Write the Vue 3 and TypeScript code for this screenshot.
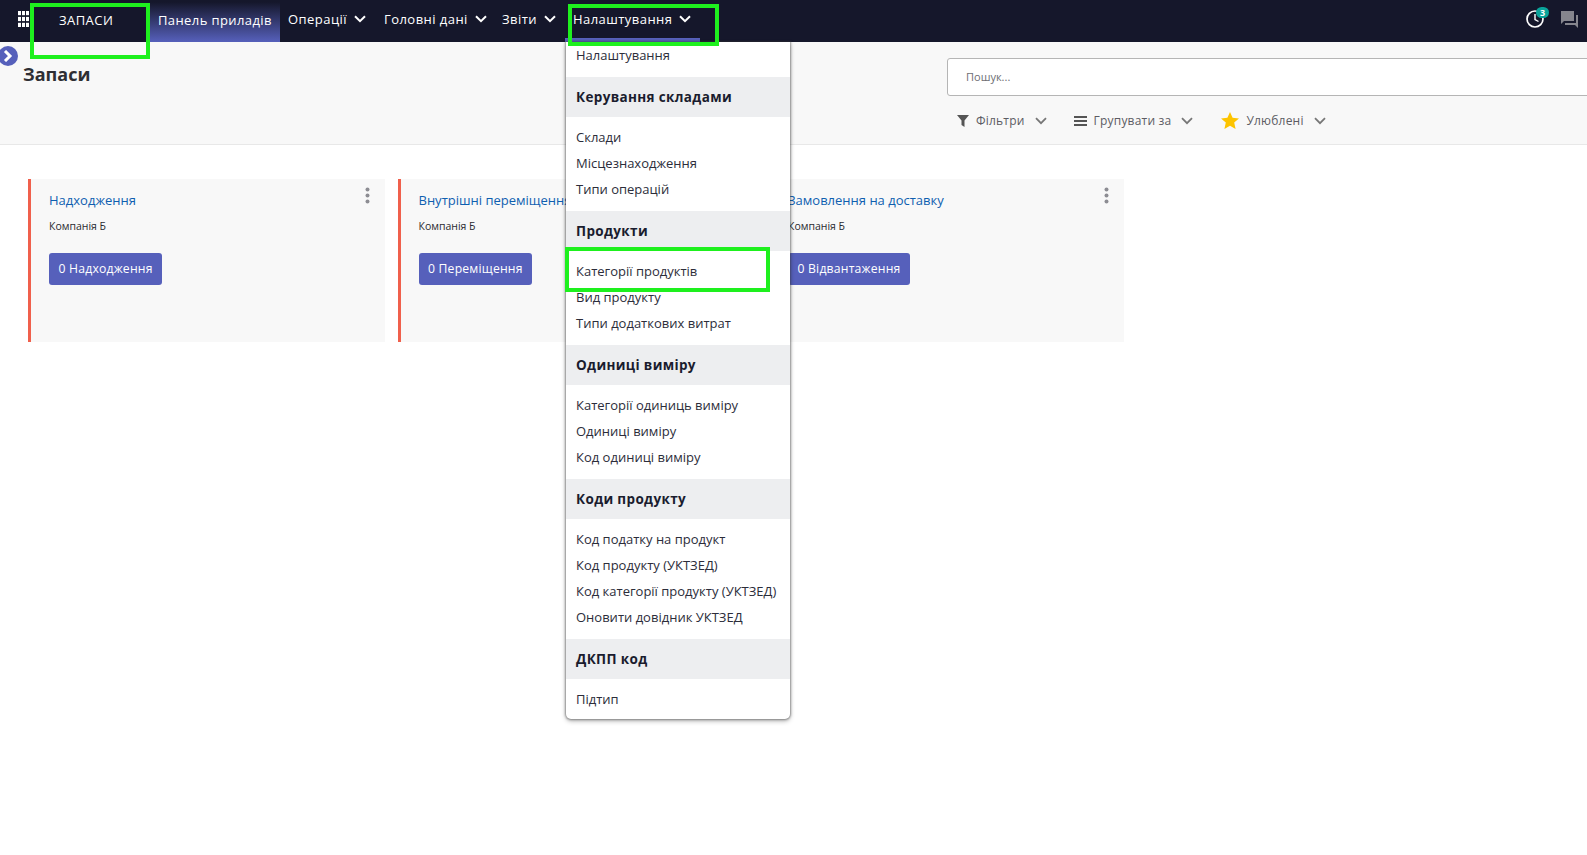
<script setup lang="ts">
interface Section { head?: string; items: string[] }
const navItems = [
  { label: 'Операції', w: 96 },
  { label: 'Головні дані', w: 118 },
  { label: 'Звіти', w: 71 },
]
const sections: Section[] = [
  { items: ['Налаштування'] },
  { head: 'Керування складами', items: ['Склади', 'Місцезнаходження', 'Типи операцій'] },
  { head: 'Продукти', items: ['Категорії продуктів', 'Вид продукту', 'Типи додаткових витрат'] },
  { head: 'Одиниці виміру', items: ['Категорії одиниць виміру', 'Одиниці виміру', 'Код одиниці виміру'] },
  { head: 'Коди продукту', items: ['Код податку на продукт', 'Код продукту (УКТЗЕД)', 'Код категорії продукту (УКТЗЕД)', 'Оновити довідник УКТЗЕД'] },
  { head: 'ДКПП код', items: ['Підтип'] },
]
const cards = [
  { title: 'Надходження', btn: '0 Надходження' },
  { title: 'Внутрішні переміщення', btn: '0 Переміщення' },
  { title: 'Замовлення на доставку', btn: '0 Відвантаження' },
]
</script>

<template>
  <div class="app">
    <header class="nav">
      <svg class="grid-ico" width="11" height="16" viewBox="0 0 11 16" fill="#fff">
        <rect x="0" y="0" width="3" height="4.2" /><rect x="4" y="0" width="3" height="4.2" /><rect x="8" y="0" width="3" height="4.2" />
        <rect x="0" y="5.9" width="3" height="4.2" /><rect x="4" y="5.9" width="3" height="4.2" /><rect x="8" y="5.9" width="3" height="4.2" />
        <rect x="0" y="11.8" width="3" height="4.2" /><rect x="4" y="11.8" width="3" height="4.2" /><rect x="8" y="11.8" width="3" height="4.2" />
      </svg>
      <div class="brand">ЗАПАСИ</div>
      <div class="nav-active">Панель приладів</div>
      <div v-for="n in navItems" :key="n.label" class="nav-item" :style="{ width: n.w + 'px' }">
        <span>{{ n.label }}</span>
        <svg class="chev" width="12" height="8" viewBox="0 0 12 8" fill="none" stroke="#fff" stroke-width="2"><path d="M1 1.2l5 5 5-5" /></svg>
      </div>
      <div class="nav-item open">
        <span>Налаштування</span>
        <svg class="chev" width="12" height="8" viewBox="0 0 12 8" fill="none" stroke="#fff" stroke-width="2"><path d="M1 1.2l5 5 5-5" /></svg>
        <div class="menu">
          <section v-for="(s, i) in sections" :key="i">
            <div v-if="s.head" class="menu-head">{{ s.head }}</div>
            <div class="menu-list">
              <div v-for="it in s.items" :key="it" class="menu-row">{{ it }}</div>
            </div>
          </section>
        </div>
      </div>
      <div class="nav-right">
        <span class="clock">
          <svg width="20" height="20" viewBox="0 0 20 20" fill="none" stroke="#fff" stroke-width="1.7"><circle cx="10" cy="10" r="8" /><path d="M10 5v5.5l3.5 2" stroke-width="1.4" /></svg>
          <b class="badge">3</b>
        </span>
        <svg width="17" height="17" viewBox="0 0 17 17" fill="#85858d"><path d="M0 0h13v10H3l-3 3zM15 4h2v13l-3-3H4v-2h11z" /></svg>
      </div>
    </header>

    <div class="sub">
      <span class="toggle">
        <svg width="10" height="12" viewBox="0 0 10 12" fill="none" stroke="#fff" stroke-width="3"><path d="M2 1l5 5-5 5" /></svg>
      </span>
      <h1 class="title">Запаси</h1>
      <div class="tools">
        <div class="search">Пошук...</div>
        <div class="filters">
          <span class="f f1">
            <svg width="12" height="12" viewBox="0 0 12 12" fill="#555"><path d="M0 0h12L7.5 5.5V12l-3-2V5.5z" /></svg>
            Фільтри
            <svg class="fchev" width="12" height="8" viewBox="0 0 12 8" fill="none" stroke="#777" stroke-width="1.8"><path d="M1 1.2l5 5 5-5" /></svg>
          </span>
          <span class="f f2">
            <svg width="13" height="10" viewBox="0 0 13 10" fill="#555"><rect width="13" height="2" /><rect y="4" width="13" height="2" /><rect y="8" width="13" height="2" /></svg>
            Групувати за
            <svg class="fchev" width="12" height="8" viewBox="0 0 12 8" fill="none" stroke="#777" stroke-width="1.8"><path d="M1 1.2l5 5 5-5" /></svg>
          </span>
          <span class="f f3">
            <svg width="18" height="17" viewBox="0 0 18 17" fill="#fdc400"><path d="M9 0l2.6 5.7 6.4.7-4.8 4.2L14.6 17 9 13.8 3.4 17l1.4-6.4L0 6.4l6.4-.7z" /></svg>
            Улюблені
            <svg class="fchev" width="12" height="8" viewBox="0 0 12 8" fill="none" stroke="#777" stroke-width="1.8"><path d="M1 1.2l5 5 5-5" /></svg>
          </span>
        </div>
      </div>
    </div>

    <main class="cards">
      <article v-for="c in cards" :key="c.title" class="card">
        <svg class="dots" width="5" height="17" viewBox="0 0 5 17" fill="#8d8d93"><circle cx="2.5" cy="2.5" r="2" /><circle cx="2.5" cy="8.5" r="2" /><circle cx="2.5" cy="14.5" r="2" /></svg>
        <div class="card-title">{{ c.title }}</div>
        <div class="card-co">Компанія Б</div>
        <button class="card-btn">{{ c.btn }}</button>
      </article>
    </main>

    <i class="mark m1"></i>
    <i class="mark m2"></i>
    <i class="mark m3"></i>
  </div>
</template>

<style scoped>
.app {
  position: relative;
  width: 1587px;
  height: 855px;
  overflow: hidden;
  background: #fff;
  font-family: "Open Sans", "Noto Sans", sans-serif;
  font-size: 13px;
  color: #1a1c2e;
}
.nav {
  display: flex;
  align-items: stretch;
  height: 42px;
  background: #15172b;
  color: #fff;
  font-size: 13px;
  letter-spacing: 0.45px;
}
.grid-ico { margin: 11px 0 0 18px; }
.brand { width: 119px; padding: 12px 0 0 30px; box-sizing: border-box; line-height: 16px; }
.nav-active {
  width: 132px;
  padding: 11px 0 0 10px;
  box-sizing: border-box;
  line-height: 18px;
  letter-spacing: .4px;
  background: linear-gradient(#15172b 5%, #5660bb);
}
.nav-item {
  position: relative;
  display: flex;
  gap: 7px;
  align-items: center;
  height: 38px;
  padding-left: 8px;
  box-sizing: border-box;
}
.chev { flex: none; }
.nav-item.open {
  width: 135px;
  height: 42px;
  border-bottom: 4px solid #5660bb;
}
.menu {
  position: absolute;
  z-index: 3;
  top: 42px;
  left: 1px;
  width: 224px;
  background: #fff;
  color: #1a1c2e;
  letter-spacing: 0;
  border-radius: 0 0 5px 5px;
  box-shadow: 0 0 2px 1px rgba(60, 60, 60, .45), 0 2px 5px rgba(0, 0, 0, .3);
}
.menu-head {
  height: 40px;
  padding-left: 10px;
  line-height: 40px;
  font-size: 13.5px;
  font-weight: 700;
  letter-spacing: .35px;
  background: #edeef0;
}
.menu-list { padding: 8px 0; }
section:first-child .menu-list { padding-top: 1px; }
section:last-child .menu-list { padding-bottom: 6px; }
.menu-row { height: 26px; padding-left: 10px; line-height: 24px; color: #2c2d3a; }
.nav-right { margin-left: auto; display: flex; align-items: center; gap: 16px; padding: 0 9px 4px 0; }
.clock { position: relative; display: flex; }
.badge {
  position: absolute;
  top: -2px;
  left: 11px;
  width: 13px;
  height: 11px;
  border-radius: 6px;
  background: #0aa39a;
  font-size: 9px;
  line-height: 11px;
  text-align: center;
  letter-spacing: 0;
}
.sub {
  position: relative;
  display: flex;
  height: 102px;
  background: #f8f8f8;
  border-bottom: 1px solid #e8e8e8;
}
.toggle {
  position: absolute;
  left: -2px;
  top: 4px;
  width: 20px;
  height: 20px;
  border-radius: 50%;
  background: #5660bb;
  display: flex;
  align-items: center;
  justify-content: center;
}
.title {
  flex: none;
  margin: 19px 0 0 23px;
  width: 924px;
  font-size: 18px;
  line-height: 26px;
  font-weight: 700;
  color: #2e2e33;
  letter-spacing: 0;
}
.tools { flex: none; width: 720px; padding-top: 16px; }
.search {
  height: 38px;
  box-sizing: border-box;
  padding-left: 18px;
  line-height: 36px;
  border: 1px solid #b5b5b5;
  border-radius: 3px;
  background: #fff;
  font-size: 11px;
  color: #6e6e73;
}
.filters { display: flex; align-items: center; margin-top: 16px; color: #5c5c63; font-size: 12px; letter-spacing: .2px; }
.f { display: flex; align-items: center; gap: 7px; }
.fchev { margin-left: 3px; }
.f1 { margin-left: 10px; }
.f2 { margin-left: 27px; }
.f3 { margin-left: 28px; }
.cards { display: flex; gap: 12.5px; padding: 34px 0 0 28px; }
.card {
  position: relative;
  width: 357px;
  height: 163px;
  box-sizing: border-box;
  border-left: 3px solid #f0604c;
  padding: 12px 18px;
  background: #f8f8f8;
}
.dots { position: absolute; top: 8px; right: 15px; }
.card-title { font-size: 13px; line-height: 18px; color: #0f5fb0; letter-spacing: 0; }
.card-co { margin-top: 9px; font-size: 10.5px; line-height: 16px; color: #2a2a30; }
.card-btn {
  display: block;
  margin-top: 19px;
  height: 32px;
  padding: 0 0 1px;
  width: auto;
  padding-inline: 9.5px;
  border: 0;
  border-radius: 3px;
  background: #5660bb;
  color: #fff;
  font: 500 12.2px "Open Sans", "Noto Sans", sans-serif;
  letter-spacing: .2px;
}
.mark { position: absolute; z-index: 5; border: 4px solid #1ef01e; box-sizing: border-box; pointer-events: none; }
.m1 { left: 30px; top: 3px; width: 120px; height: 56px; }
.m2 { left: 568px; top: 4px; width: 151px; height: 42px; }
.m3 { left: 565px; top: 247px; width: 205px; height: 45px; }
</style>
